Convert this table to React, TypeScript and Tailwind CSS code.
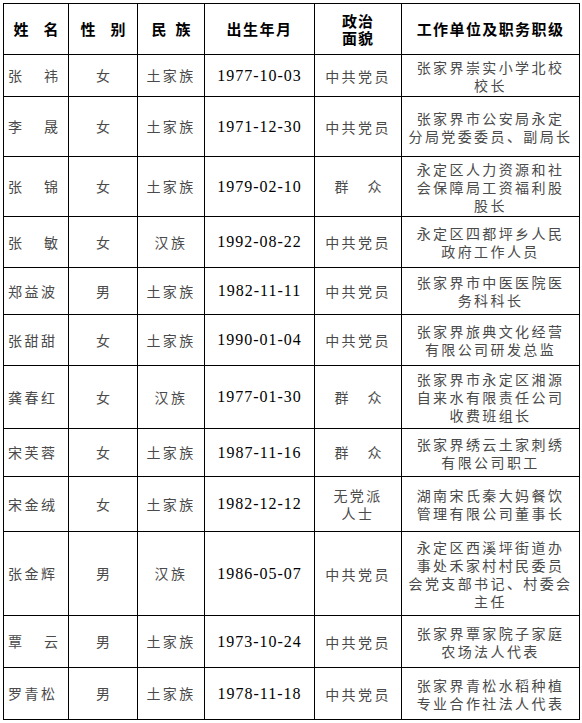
type Row = {
  name: string[];
  gender: string;
  ethnic: string;
  birth: string;
  party: string[];
  work: string[];
  h: string;
};

const rows: Row[] = [
  { name: ["张", "祎"], gender: "女", ethnic: "土家族", birth: "1977-10-03", party: ["中共党员"], work: ["张家界崇实小学北校", "校长"], h: "h-[42px]" },
  { name: ["李", "晟"], gender: "女", ethnic: "土家族", birth: "1971-12-30", party: ["中共党员"], work: ["张家界市公安局永定", "分局党委委员、副局长"], h: "h-[60px]" },
  { name: ["张", "锦"], gender: "女", ethnic: "土家族", birth: "1979-02-10", party: ["群众"], work: ["永定区人力资源和社", "会保障局工资福利股", "股长"], h: "h-[60px]" },
  { name: ["张", "敏"], gender: "女", ethnic: "汉族", birth: "1992-08-22", party: ["中共党员"], work: ["永定区四都坪乡人民", "政府工作人员"], h: "h-[51px]" },
  { name: ["郑益波"], gender: "男", ethnic: "土家族", birth: "1982-11-11", party: ["中共党员"], work: ["张家界市中医医院医", "务科科长"], h: "h-[47px]" },
  { name: ["张甜甜"], gender: "女", ethnic: "土家族", birth: "1990-01-04", party: ["中共党员"], work: ["张家界旅典文化经营", "有限公司研发总监"], h: "h-[51px]" },
  { name: ["龚春红"], gender: "女", ethnic: "汉族", birth: "1977-01-30", party: ["群众"], work: ["张家界市永定区湘源", "自来水有限责任公司", "收费班组长"], h: "h-[63px]" },
  { name: ["宋芙蓉"], gender: "女", ethnic: "土家族", birth: "1987-11-16", party: ["群众"], work: ["张家界绣云土家刺绣", "有限公司职工"], h: "h-[48px]" },
  { name: ["宋金绒"], gender: "女", ethnic: "土家族", birth: "1982-12-12", party: ["无党派", "人士"], work: ["湖南宋氏秦大妈餐饮", "管理有限公司董事长"], h: "h-[55px]" },
  { name: ["张金辉"], gender: "男", ethnic: "汉族", birth: "1986-05-07", party: ["中共党员"], work: ["永定区西溪坪街道办", "事处禾家村村民委员", "会党支部书记、村委会", "主任"], h: "h-[84px]" },
  { name: ["覃", "云"], gender: "男", ethnic: "土家族", birth: "1973-10-24", party: ["中共党员"], work: ["张家界覃家院子家庭", "农场法人代表"], h: "h-[52px]" },
  { name: ["罗青松"], gender: "男", ethnic: "土家族", birth: "1978-11-18", party: ["中共党员"], work: ["张家界青松水稻种植", "专业合作社法人代表"], h: "h-[52px]" },
];

const cjk = "font-['Noto_Sans_CJK_SC',sans-serif]";
const cell = "border border-black p-0 align-middle";

function Name({ parts }: { parts: string[] }) {
  if (parts.length === 1) {
    return <span className="pl-[4px] tracking-[2.5px]">{parts[0]}</span>;
  }
  return (
    <span className="flex w-[54px] justify-between pl-[4px]">
      <span>{parts[0]}</span>
      <span>{parts[1]}</span>
    </span>
  );
}

function Party({ lines }: { lines: string[] }) {
  if (lines.length === 1 && lines[0] === "群众") {
    return (
      <span className="mx-auto flex w-[47px] justify-between">
        <span>群</span>
        <span>众</span>
      </span>
    );
  }
  return (
    <div className="flex flex-col items-center leading-[18px] tracking-[2.4px]">
      {lines.map((l) => (
        <span key={l}>{l}</span>
      ))}
    </div>
  );
}

export default function App() {
  return (
    <main className={`min-h-screen bg-white pl-[3px] pt-[3px] ${cjk}`}>
      <table className="w-[576px] table-fixed border-collapse text-[14px] text-[#4a4a4a]">
        <colgroup>
          <col className="w-[65px]" />
          <col className="w-[69px]" />
          <col className="w-[67px]" />
          <col className="w-[110px]" />
          <col className="w-[87px]" />
          <col className="w-[178px]" />
        </colgroup>
        <thead>
          <tr className="h-[51px] text-[15px] font-bold text-black">
            <th className={`${cell} text-center`}>姓　名</th>
            <th className={`${cell} text-center`}>性　别</th>
            <th className={cell}>
              <span className="flex justify-center gap-[9px]">
                <span>民</span>
                <span>族</span>
              </span>
            </th>
            <th className={`${cell} text-center tracking-[1.5px]`}>出生年月</th>
            <th className={`${cell} text-center leading-[17px] tracking-[1px]`}>
              政治
              <br />
              面貌
            </th>
            <th className={`${cell} text-center tracking-[1.4px]`}>工作单位及职务职级</th>
          </tr>
        </thead>
        <tbody>
          {rows.map((r) => (
            <tr key={r.birth} className={r.h}>
              <td className={cell}>
                <Name parts={r.name} />
              </td>
              <td className={`${cell} text-center`}>{r.gender}</td>
              <td className={`${cell} text-center tracking-[2.4px]`}>{r.ethnic}</td>
              <td className={`${cell} text-center font-['Liberation_Serif',serif] text-[16px] tracking-[1px] text-black`}>
                {r.birth}
              </td>
              <td className={`${cell} text-center`}>
                <Party lines={r.party} />
              </td>
              <td className={cell}>
                <div className="flex flex-col items-center leading-[18px] tracking-[2.4px]">
                  {r.work.map((l) => (
                    <span key={l}>{l}</span>
                  ))}
                </div>
              </td>
            </tr>
          ))}
        </tbody>
      </table>
    </main>
  );
}
